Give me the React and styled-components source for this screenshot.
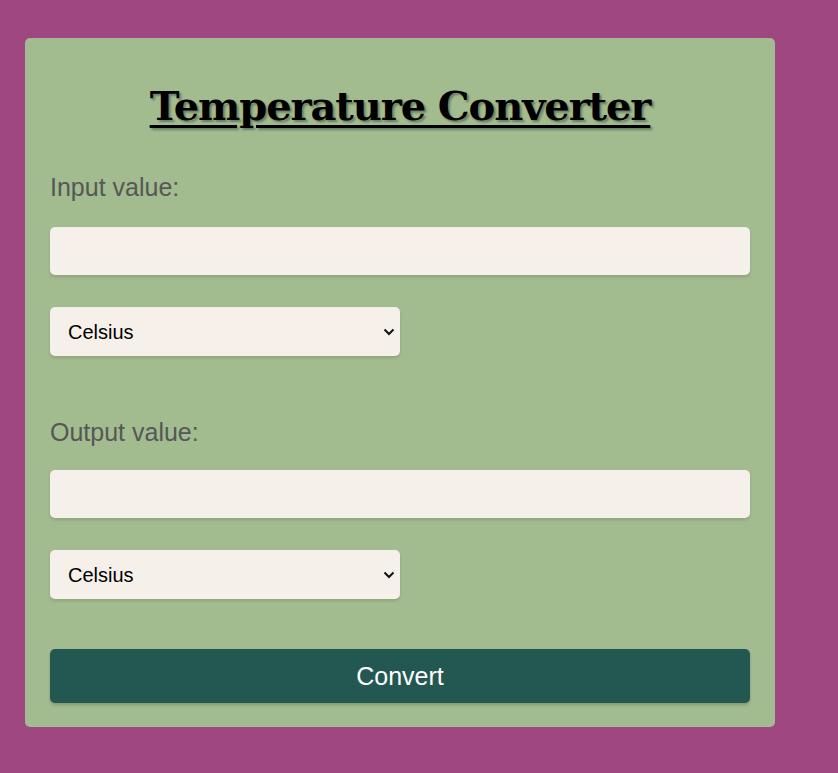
import React from "react";
import styled, { createGlobalStyle } from "styled-components";

const Global = createGlobalStyle`
  html, body { margin: 0; padding: 0; }
  body {
    background: #9e4780;
    font-family: "Liberation Sans", Arial, sans-serif;
    min-height: 773px;
  }
`;

const Page = styled.div`
  padding: 38px 25px 46px;
`;

const Card = styled.div`
  width: 700px;
  padding: 25px 25px 24px;
  background: #a2bb8f;
  border-radius: 5px;
  display: flex;
  flex-direction: column;
`;

const Title = styled.h1`
  margin: 18px 0 0;
  text-align: center;
  font-family: "DejaVu Serif", serif;
  font-weight: bold;
  font-size: 40px;
  line-height: 50px;
  letter-spacing: -1.1px;
  color: #000;
  text-decoration: underline;
  text-decoration-thickness: 3px;
  text-underline-offset: 5px;
  text-shadow: 2px 2px 2px rgba(40, 50, 40, 0.45);
`;

const Label = styled.label`
  display: block;
  margin-top: ${(p) => p.$top}px;
  font-size: 25px;
  line-height: 28px;
  color: #575757;
`;

const TextInput = styled.input`
  display: block;
  box-sizing: border-box;
  width: 100%;
  height: 48px;
  margin-top: ${(p) => p.$top}px;
  border: none;
  border-radius: 5px;
  background: #f5f1ea;
  box-shadow: 0 2px 3px rgba(0, 0, 0, 0.12);
  padding: 0 14px;
  font-family: "Liberation Sans", Arial, sans-serif;
  font-size: 20px;
  outline: none;
`;

const SelectWrap = styled.div`
  position: relative;
  width: 350px;
  margin-top: 32px;
`;

const Select = styled.select`
  display: block;
  box-sizing: border-box;
  width: 100%;
  height: 49px;
  border: none;
  border-radius: 5px;
  background: #f5f1ea;
  box-shadow: 0 2px 3px rgba(0, 0, 0, 0.12);
  padding: 0 36px 0 18px;
  font-family: "Liberation Sans", Arial, sans-serif;
  font-size: 20px;
  color: #000;
  outline: none;
  appearance: none;
  -webkit-appearance: none;
`;

const Chevron = styled.svg`
  position: absolute;
  right: 5px;
  top: 20px;
  width: 12px;
  height: 9px;
  pointer-events: none;
`;

const Button = styled.button`
  display: block;
  width: 100%;
  height: 54px;
  margin-top: 50px;
  border: none;
  border-radius: 5px;
  background: #235852;
  color: #fff;
  font-family: "Liberation Sans", Arial, sans-serif;
  font-size: 25px;
  box-shadow: 0 2px 3px rgba(0, 0, 0, 0.18);
  cursor: pointer;
`;

const units = ["Celsius", "Fahrenheit", "Kelvin"];

function UnitSelect() {
  return (
    <SelectWrap>
      <Select defaultValue="Celsius">
        {units.map((u) => (
          <option key={u}>{u}</option>
        ))}
      </Select>
      <Chevron viewBox="0 0 12 9">
        <path d="M1.5 2.5 L6 7 L10.5 2.5" fill="none" stroke="#111" strokeWidth="2" />
      </Chevron>
    </SelectWrap>
  );
}

export default function App() {
  return (
    <>
      <Global />
      <Page>
        <Card>
          <Title>Temperature Converter</Title>
          <Label $top={42}>Input value:</Label>
          <TextInput $top={26} type="text" />
          <UnitSelect />
          <Label $top={62}>Output value:</Label>
          <TextInput $top={24} type="text" />
          <UnitSelect />
          <Button>Convert</Button>
        </Card>
      </Page>
    </>
  );
}
